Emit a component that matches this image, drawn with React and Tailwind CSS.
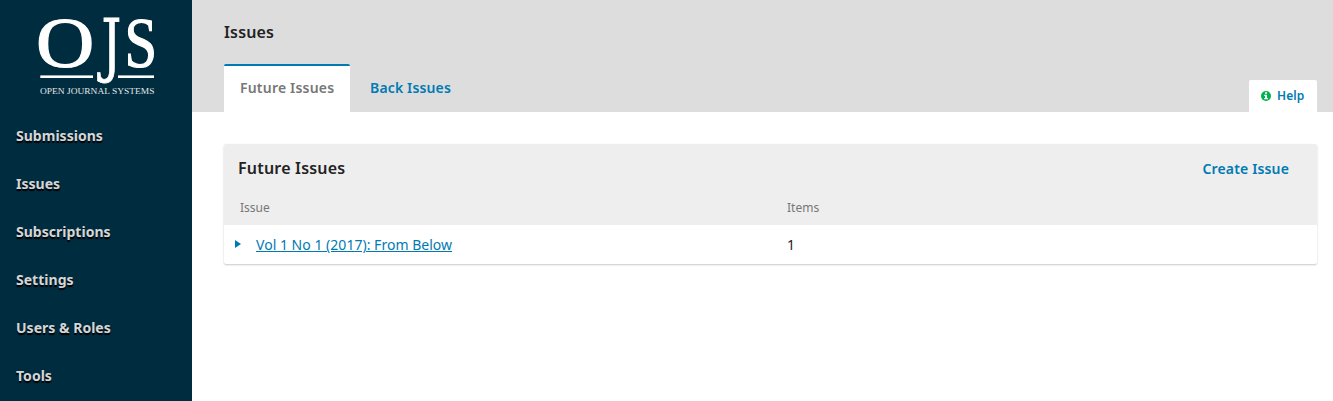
import React from "react";

const navItems = ["Submissions", "Issues", "Subscriptions", "Settings", "Users & Roles", "Tools"];

function Logo() {
  return (
    <svg className="ml-8 block h-[112px] w-32 shrink-0 overflow-visible" viewBox="32 0 128 112" fill="#fff" stroke="#fff" strokeWidth="0" fontFamily="'Liberation Serif', serif">
      <text transform="translate(36 67) scale(1.13 1)" fontSize="71.5" strokeWidth="1.2">O</text>
      <text transform="translate(101.5 69) scale(0.72 1)" fontSize="68.5" fontFamily="'DejaVu Serif', serif" strokeWidth="0.8">J</text>
      <text transform="translate(124.4 67) scale(0.82 1)" fontSize="71.5" strokeWidth="1.2">S</text>
      <rect x="40.3" y="75.4" width="52.7" height="2.6" />
      <rect x="118" y="75.4" width="36" height="2.6" />
      <text x="40" y="93.7" fontSize="9" fill="#e2e7ea" textLength="114.5" lengthAdjust="spacingAndGlyphs">
        OPEN JOURNAL SYSTEMS
      </text>
    </svg>
  );
}

function Sidebar() {
  return (
    <aside className="flex h-full w-48 shrink-0 flex-col bg-[#002c40]">
      <Logo />
      <nav className="flex flex-col">
        {navItems.map((item) => (
          <a key={item} className="h-12 px-4 text-sm leading-[48px] font-bold tracking-[0.02px] text-[#d4d6d7] [text-shadow:0_2px_1px_#000]">
            {item}
          </a>
        ))}
      </nav>
    </aside>
  );
}

function Header() {
  return (
    <header className="flex h-28 flex-col justify-between bg-[#ddd] pr-4 pl-8">
      <h1 className="h-16 text-base leading-[64px] font-semibold tracking-[0.16px] text-[#222]">Issues</h1>
      <div className="flex items-end">
        <a className="h-12 w-[126px] rounded-t-xs border-t-2 border-[#007ab2] bg-white px-4 text-sm leading-[44px] font-semibold tracking-[0.2px] whitespace-nowrap text-[#777]">
          Future Issues
        </a>
        <a className="h-12 px-5 text-sm leading-[48px] font-semibold tracking-[0.15px] text-[#007ab2]">Back Issues</a>
        <a className="ml-auto flex h-8 w-[68px] items-center rounded-t-xs bg-white pl-3 text-xs font-semibold tracking-[0.12px] text-[#007ab2]">
          <svg className="mr-[6px] mb-px h-[10px] w-[10px]" viewBox="0 0 10 10">
            <circle cx="5" cy="5" r="5" fill="#00b24e" />
            <path d="M4 1.3h2v1.4H4zM3.2 3.7H6v3.4h.9v1.2H3.2V7.1H4V4.9h-.8z" fill="#fff" />
          </svg>
          Help
        </a>
      </div>
    </header>
  );
}

function IssuesPanel() {
  return (
    <section className="mt-8 mr-4 ml-8 rounded-xs bg-white shadow-[0_1px_2px_rgba(0,0,0,0.22)]">
      <div className="h-[81px] rounded-t-xs bg-[#eee]">
        <div className="flex h-12 items-center justify-between pr-7 pl-[14px]">
          <h2 className="text-base font-semibold tracking-[0.2px] text-[#222]">Future Issues</h2>
          <a className="pt-0.5 text-sm font-semibold tracking-[0.15px] text-[#007ab2]">Create Issue</a>
        </div>
        <div className="grid h-8 grid-cols-2 px-4 text-xs leading-8 text-[#777]">
          <span>Issue</span>
          <span className="pl-[16.5px]">Items</span>
        </div>
      </div>
      <div className="grid h-[39px] grid-cols-2 text-sm leading-[40px]">
        <div className="flex items-center pl-[11px]">
          <svg className="mr-[15px] mb-[2px] h-2 w-[6px]" viewBox="0 0 6 8">
            <path d="M0 0L6 4L0 8Z" fill="#007ab2" />
          </svg>
          <a className="tracking-[0.02px] text-[#007ab2] underline">Vol 1 No 1 (2017): From Below</a>
        </div>
        <span className="pl-[16.5px] text-[#222]">1</span>
      </div>
    </section>
  );
}

export default function App() {
  return (
    <div className="flex h-[401px] w-full overflow-hidden bg-white font-['Noto_Sans',sans-serif]">
      <Sidebar />
      <main className="min-w-0 flex-1">
        <Header />
        <IssuesPanel />
      </main>
    </div>
  );
}
